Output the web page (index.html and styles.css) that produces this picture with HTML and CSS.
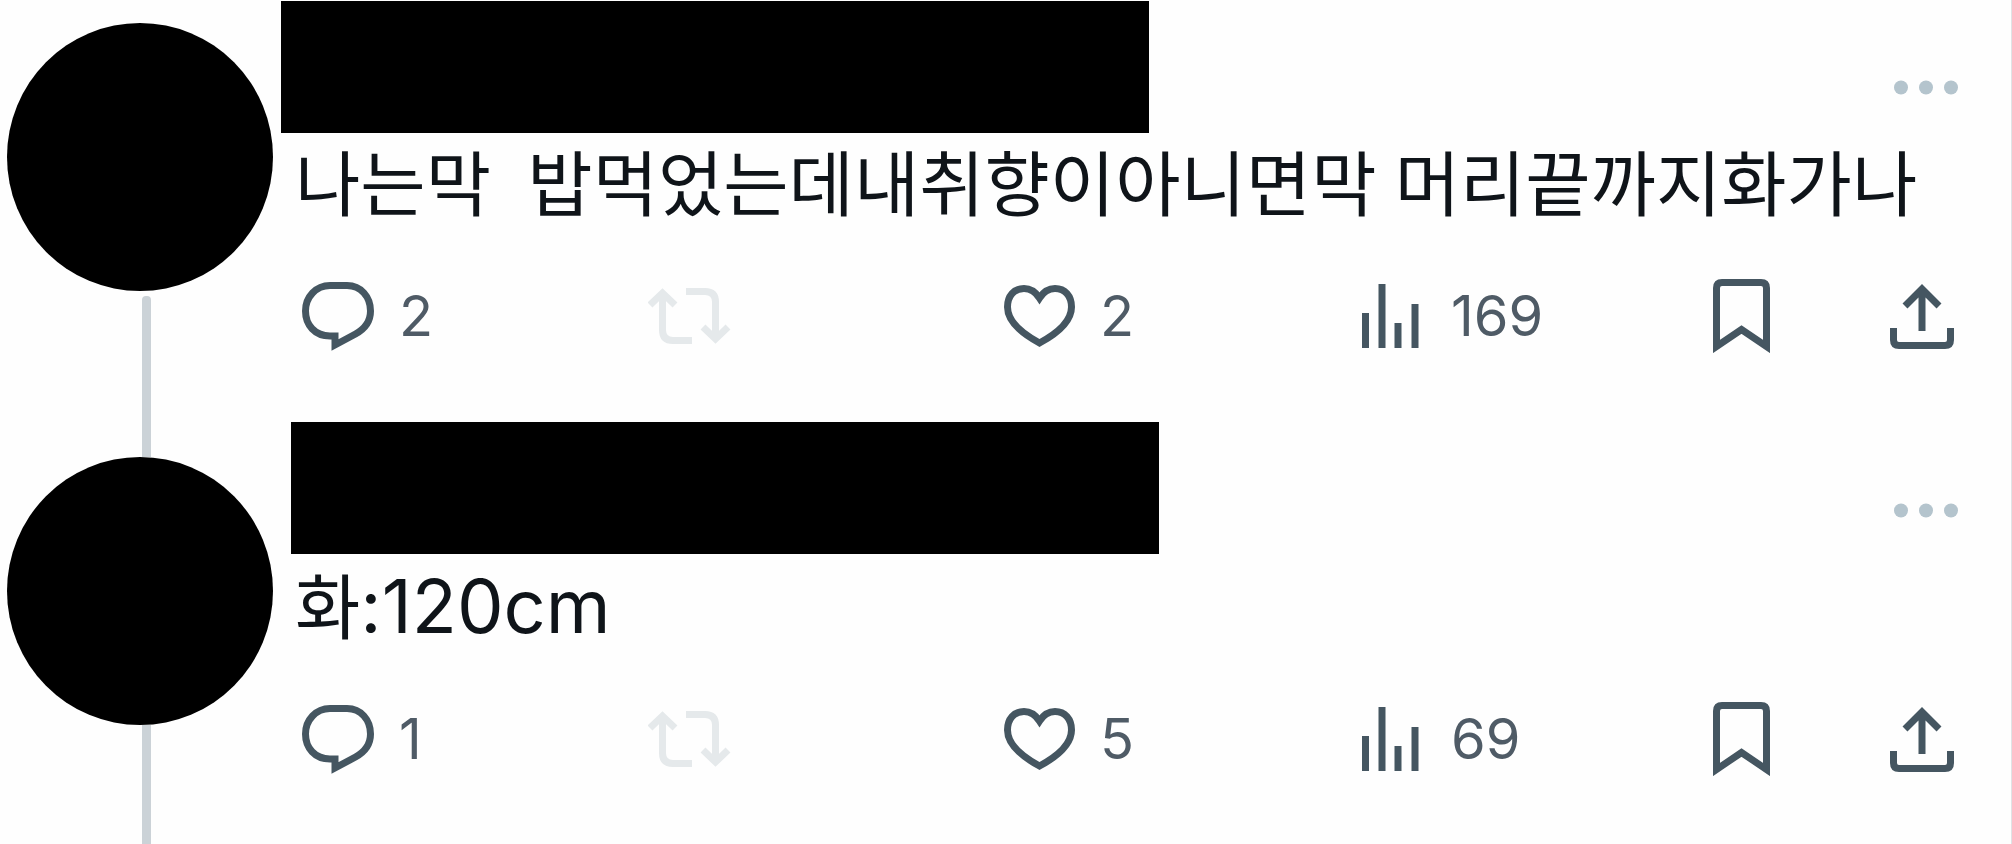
FILE: index.html
```html
<!DOCTYPE html>
<html lang="ko">
<head>
<meta charset="UTF-8">
<meta name="viewport" content="width=device-width, initial-scale=1.0">
<title>Thread</title>
<link rel="stylesheet" href="styles.css">
</head>
<body>

<!-- shared icons -->
<svg class="sprite" aria-hidden="true">
    <symbol id="reply" viewBox="0 0 72 69">
        <path d="M28 3.5h17C59 3.5 68.5 15 68.5 29c0 11-6 18-15 23L33 63V54H28C13 54 3.5 43 3.5 29S14 3.5 28 3.5z"/>
    </symbol>
    <symbol id="repost" viewBox="0 0 83 56">
        <path d="M2 17L14.5 5L27 17M14.5 5V42q0 10.500 10.500 10.500H44M38 3.500H57q10.500 0 10.500 10.500V51M55 39L67.500 51L80 39"/>
    </symbol>
    <symbol id="like" viewBox="0 0 71 62">
        <path d="M35.500 13C31 6 26 3.500 20 3.500C10 3.500 3.500 11 3.500 22C3.500 36 17 48 35.500 58C54 48 67.500 36 67.500 22C67.500 11 61 3.500 51 3.500C45 3.500 40 6 35.500 13z"/>
    </symbol>
    <symbol id="views" viewBox="0 0 58 64">
        <path d="M3.500 29V64M20 0V64M36 39V64M53 20V64"/>
    </symbol>
    <symbol id="bookmark" viewBox="0 0 57 74">
        <path d="M3.500 67.500V9q0-5.500 5.500-5.500H48q5.500 0 5.500 5.500V67.500L28.500 50.500z"/>
    </symbol>
    <symbol id="share" viewBox="0 0 64 65">
        <path d="M15 22L32 5L49 22M32 5V47M3.500 44V56q0 5.500 5.500 5.500H55q5.500 0 5.500-5.500V44"/>
    </symbol>
    <symbol id="more" viewBox="0 0 64 15">
        <circle cx="7" cy="7.500" r="7"/>
        <circle cx="32" cy="7.500" r="7"/>
        <circle cx="57" cy="7.500" r="7"/>
    </symbol>
</svg>

<main class="thread">
    <article class="tweet">
        <div class="gutter">
            <div class="avatar"></div>
            <div class="line line-start"></div>
        </div>
        <div class="content">
            <header class="tweet-header">
                <div class="name"></div>
                <button class="more" type="button" aria-label="More"><svg width="64" height="15"><use href="#more"/></svg></button>
            </header>
            <p class="text">나는막&nbsp; 밥먹었는데내취향이아니면막 머리끝까지화가나</p>
            <div class="actions">
                <button type="button" aria-label="Reply"><svg width="72" height="69"><use href="#reply"/></svg><span>2</span></button>
                <button type="button" aria-label="Repost" disabled><svg width="83" height="56"><use href="#repost"/></svg></button>
                <button type="button" aria-label="Like"><svg width="71" height="62"><use href="#like"/></svg><span>2</span></button>
                <button class="views" type="button" aria-label="Views"><svg width="58" height="64"><use href="#views"/></svg><span>169</span></button>
                <button type="button" aria-label="Bookmark"><svg width="57" height="74"><use href="#bookmark"/></svg></button>
                <button type="button" aria-label="Share"><svg width="64" height="65"><use href="#share"/></svg></button>
            </div>
        </div>
    </article>

    <article class="tweet tweet-reply">
        <div class="gutter">
            <div class="line line-top"></div>
            <div class="avatar"></div>
            <div class="line"></div>
        </div>
        <div class="content">
            <header class="tweet-header">
                <div class="name"></div>
                <button class="more" type="button" aria-label="More"><svg width="64" height="15"><use href="#more"/></svg></button>
            </header>
            <p class="text">화<span class="latin">:120cm</span></p>
            <div class="actions">
                <button type="button" aria-label="Reply"><svg width="72" height="69"><use href="#reply"/></svg><span>1</span></button>
                <button type="button" aria-label="Repost" disabled><svg width="83" height="56"><use href="#repost"/></svg></button>
                <button type="button" aria-label="Like"><svg width="71" height="62"><use href="#like"/></svg><span>5</span></button>
                <button class="views" type="button" aria-label="Views"><svg width="58" height="64"><use href="#views"/></svg><span>69</span></button>
                <button type="button" aria-label="Bookmark"><svg width="57" height="74"><use href="#bookmark"/></svg></button>
                <button type="button" aria-label="Share"><svg width="64" height="65"><use href="#share"/></svg></button>
            </div>
        </div>
    </article>
</main>

</body>
</html>
```
FILE: styles.css
```css
* {
    box-sizing: border-box;
}
body {
    margin: 0;
    background-color: #fefefe;
    color: #0f1419;
    font-family: Inter, "Noto Sans CJK KR", sans-serif;
}
.sprite {
    display: none;
}
.thread {
    display: flex;
    flex-direction: column;
    min-height: 100vh;
    border-right: 1px solid #dfe3e6;
}
.tweet {
    display: flex;
}
.tweet-reply {
    flex: 1;
}
.gutter {
    display: flex;
    flex-direction: column;
    flex: none;
    width: 281px;
}
.avatar {
    width: 266px;
    height: 268px;
    margin-left: 7px;
    border-radius: 50%;
    background-color: #000;
}
.tweet:first-child .avatar {
    margin-top: 23px;
}
.line {
    flex: 1;
    width: 9px;
    margin-left: 142px;
    background-color: #cbd2d7;
}
.line-start {
    margin-top: 5px;
    border-radius: 4px 4px 0 0;
}
.line-top {
    flex: none;
    height: 36px;
}
.content {
    flex: 1;
    min-width: 0;
    padding: 1px 53px 67px 0;
}
.tweet-header {
    display: flex;
    justify-content: space-between;
}
.name {
    width: 868px;
    height: 132px;
    background-color: #000;
}
.tweet-reply .name {
    margin: 0 0 2px 10px;
}
button {
    display: flex;
    align-items: center;
    padding: 0;
    border: none;
    background: none;
    color: #4f5b66;
    font-family: inherit;
    font-size: 56px;
    cursor: pointer;
}
.more {
    align-self: flex-end;
    height: 92px;
}
.more svg {
    fill: #b4c4cd;
}
.text {
    height: 145px;
    margin: 0;
    padding-left: 14px;
    font-family: Lato, "Noto Sans CJK KR", sans-serif;
    font-size: 71px;
    line-height: 100px;
    white-space: nowrap;
}
.latin {
    font-family: Inter, sans-serif;
    font-size: 74px;
}
.actions {
    display: grid;
    grid-template-columns: 346fr 356fr 358fr 351fr 177fr 64px;
    height: 76px;
    padding: 0 4px 0 21px;
}
.actions button {
    gap: 25px;
}
.actions .views {
    gap: 31px;
}
.actions svg {
    flex: none;
    fill: none;
    stroke: #455661;
    stroke-width: 7px;
}
.actions button:disabled svg {
    stroke: #e5e9eb;
}
```
